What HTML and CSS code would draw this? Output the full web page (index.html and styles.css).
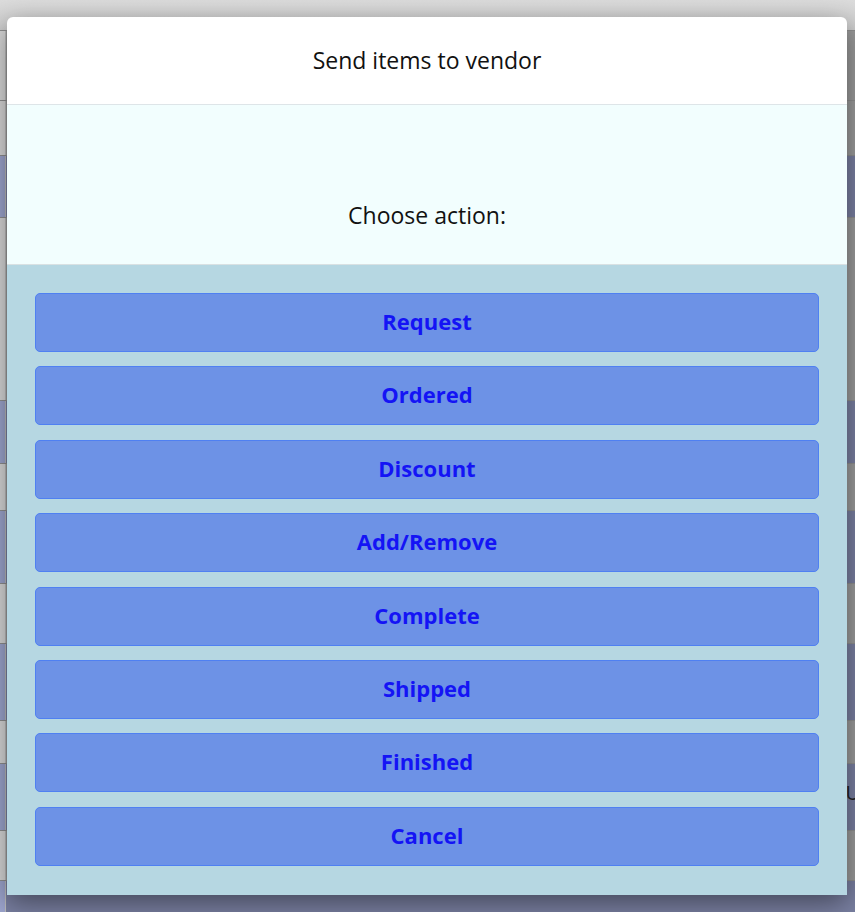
FILE: index.html
```html
<!DOCTYPE html>
<html lang="en">

<head>
    <meta charset="UTF-8">
    <meta name="viewport" content="width=device-width, initial-scale=1.0">
    <title>Send items to vendor</title>
    <link rel="stylesheet" href="styles.css">
</head>

<body>
    <!-- page behind the dialog (dimmed) -->
    <div class="page">
        <div class="band top"></div>
        <div class="band h70"></div>
        <div class="band h55"></div>
        <div class="band stripe h62"></div>
        <div class="band h183"></div>
        <div class="band stripe h63"></div>
        <div class="band h47"></div>
        <div class="band stripe h73"></div>
        <div class="band h60"></div>
        <div class="band stripe h77"></div>
        <div class="band h43"></div>
        <div class="band stripe h67"><span class="cell">U</span></div>
        <div class="band h50"></div>
        <div class="band stripe h32"></div>
    </div>

    <div class="modal">
        <div class="modal-header">Send items to vendor</div>
        <div class="modal-body">Choose action:</div>
        <div class="modal-footer">
            <button class="btn">Request</button>
            <button class="btn">Ordered</button>
            <button class="btn">Discount</button>
            <button class="btn">Add/Remove</button>
            <button class="btn">Complete</button>
            <button class="btn">Shipped</button>
            <button class="btn">Finished</button>
            <button class="btn">Cancel</button>
        </div>
    </div>
</body>

</html>
```

FILE: styles.css
```css
body {
    font-family: "Open Sans", "Noto Sans", sans-serif;
    margin: 0;
    background-color: #9c9c9c;
    overflow: hidden;
}

.page {
    height: 912px;
}

.band {
    background: linear-gradient(to right, #d9d9d9 0 5px, #bdbdbd 5px 6px, #9c9c9c 6px);
    border-top: 1px solid #8f8f8f;
    box-sizing: border-box;
    text-align: right;
}

.band.top {
    height: 30px;
    border-top: none;
    background: linear-gradient(to bottom, #dcdcdc, #cfcfcf);
}

.band.stripe {
    background: linear-gradient(to right, #9ea6cf 0 5px, #bdbdbd 5px 6px, #7a80a2 6px);
}

.cell {
    display: inline-block;
    font-size: 20px;
    line-height: 58px;
    color: #222;
    margin-right: -5px;
}

.h32 { height: 32px; }
.h43 { height: 43px; }
.h47 { height: 47px; }
.h50 { height: 50px; }
.h55 { height: 55px; }
.h60 { height: 60px; }
.h62 { height: 62px; }
.h63 { height: 63px; }
.h67 { height: 67px; }
.h70 { height: 70px; }
.h73 { height: 73px; }
.h77 { height: 77px; }
.h183 { height: 183px; }

.modal {
    position: absolute;
    top: 17px;
    left: 7px;
    width: 840px;
    background-color: white;
    border-radius: 6px 6px 0 0;
    box-shadow: 0 8px 28px rgba(0, 0, 0, 0.45);
}

.modal-header {
    height: 87px;
    line-height: 87px;
    text-align: center;
    font-size: 23px;
    color: #111;
    border-bottom: 1px solid #dee5e8;
}

.modal-body {
    background-color: #f2fefe;
    padding: 95px 0 34px;
    line-height: 30px;
    text-align: center;
    font-size: 23px;
    color: #111;
    border-bottom: 1px solid #d9e1e3;
}

.modal-footer {
    background-color: #b6d7e2;
    padding: 28px 28px 29px;
    display: flex;
    flex-direction: column;
    gap: 14.4px;
}

.btn {
    height: 59px;
    padding: 0 0 3px;
    background-color: #6d92e6;
    border: 1px solid #4f80f2;
    border-radius: 5px;
    color: #1414f5;
    font-family: "Open Sans", "Noto Sans", sans-serif;
    font-size: 22px;
    font-weight: bold;
    cursor: pointer;
}
```
